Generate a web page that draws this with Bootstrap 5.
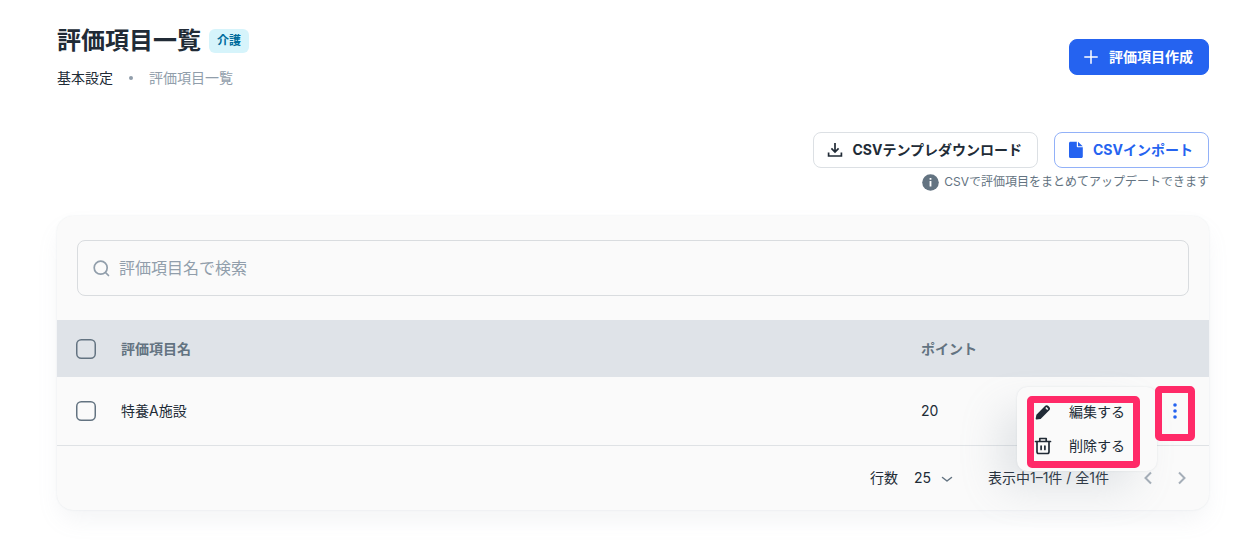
<!DOCTYPE html>
<html lang="ja">
<head>
<meta charset="utf-8">
<meta name="viewport" content="width=device-width, initial-scale=1">
<title>評価項目一覧</title>
<link href="https://cdn.jsdelivr.net/npm/bootstrap@5.3.0/dist/css/bootstrap.min.css" rel="stylesheet">
<style>
body{font-family:Inter,"Noto Sans CJK JP",sans-serif;font-size:14px;line-height:22px;color:#212b36;background:#fff}
.page{padding:23px 37px 32px 57px}
svg{display:block;flex:none}
.page-title{font-size:24px;line-height:36px;font-weight:700}
.tag{font-size:12px;line-height:24px;font-weight:700;padding:0 8px;border-radius:6px;background:#d6f4fb;color:#006c9c}
.crumbs a{color:#212b36;text-decoration:none}
.crumbs .crumb-dot{width:4px;height:4px;border-radius:50%;background:#919eab;margin:0 16px}
.crumbs .current{color:#919eab}
.btn{height:36px;font-size:14px;line-height:24px;font-weight:700;border-radius:8px;padding:0 15px;display:inline-flex;align-items:center}
.btn-create{background:#2563f0;color:#fff;border-color:#2563f0;padding-left:14px}
.btn-create svg{margin-right:11px}
.btn-template,.btn-import{padding:0 15px 0 11px;gap:7px}
.btn-template{border-color:#dce0e4;color:#212b36}
.btn-import{border-color:#92b1f8;color:#2563f0}
.csv-tools{margin-top:43px}
.hint{font-size:12px;line-height:20px;color:#637381;gap:5px}
.panel{background:#fafafa;border-radius:16px;box-shadow:0 0 2px rgba(145,158,171,.2),0 12px 24px -4px rgba(145,158,171,.12)}
.search{height:56px;border:1px solid #d9dcdf;border-radius:8px;padding:0 14px;gap:8px}
.search input{border:0;outline:0;background:transparent;font-size:16px;line-height:24px;padding:0;color:#212b36}
.search input::placeholder{color:#919eab;opacity:1}
.items{table-layout:fixed;width:100%;border-collapse:separate;border-spacing:0}
.items th{height:57px;background:#dfe3e8;color:#637381;font-weight:700;padding:0 16px}
.items td{height:69px;padding:0 16px;border-bottom:1px solid #dfe2e5}
.items .pick{width:48px;padding:0 0 0 17px}
.items .name-col{width:800px}
.items .act{width:68px;padding:0}
.form-check-input[type=checkbox]{display:block;width:24px;height:24px;margin:0;border:0;border-radius:6px;background:transparent url("data:image/svg+xml,%3Csvg xmlns='http://www.w3.org/2000/svg' viewBox='0 0 24 24'%3E%3Crect x='2.75' y='2.75' width='18.5' height='18.5' rx='4.5' fill='none' stroke='%23637381' stroke-width='1.5'/%3E%3C/svg%3E") center/24px no-repeat}
.form-check-input[type=checkbox]:checked{background-color:#2563f0}
.more{position:relative;width:40px;margin-left:14px}
.dots-btn,.pager-btn{border:0;background:none;padding:0;display:flex;align-items:center;justify-content:center}
.dots-btn{width:40px;height:55px}
.mark-dots{position:absolute;inset:2px 0 -2px;border:7px solid #ff2a68;border-radius:5px;pointer-events:none;z-index:3}
.row-menu{position:absolute;right:38px;top:3px;width:140px;height:84px;border-radius:10px;background:#fafafa;padding:8px;box-shadow:0 0 2px rgba(145,158,171,.24),-20px 20px 40px -4px rgba(145,158,171,.24);z-index:2}
.row-menu button{border:0;background:none;width:100%;height:34px;display:flex;align-items:center;padding:0 8px;gap:16px;color:#212b36}
.mark-menu{position:absolute;inset:9px 17px 3px 10px;border:7px solid #ff2a68;border-radius:5px;pointer-events:none}
.pager{height:64px;padding-right:10px}
.pager select{appearance:none;border:0;background:transparent;color:#212b36;width:40px;padding:0;line-height:22px}
.rows-select{position:relative;margin:0 34px 0 16px}
.rows-select svg{position:absolute;right:0;top:5px;pointer-events:none}
.range{margin-right:22px}
.pager-btn{width:34px;height:34px}
</style>
</head>
<body>
<main class="page">
  <header class="d-flex justify-content-between align-items-start">
    <div>
      <div class="d-flex align-items-center gap-2"><h1 class="page-title mb-0">評価項目一覧</h1><span class="tag">介護</span></div>
      <nav class="crumbs d-flex align-items-center mt-2" aria-label="パンくず"><a href="#">基本設定</a><span class="crumb-dot"></span><span class="current">評価項目一覧</span></nav>
    </div>
    <button type="button" class="btn btn-create mt-3"><svg width="14" height="14" viewBox="0 0 14 14" fill="none" stroke="#fff" stroke-width="1.5" stroke-linecap="round"><path d="M7 .8v12.4M.8 7h12.4"/></svg>評価項目作成</button>
  </header>

  <section class="csv-tools d-flex flex-column align-items-end mb-4">
    <div class="d-flex gap-3">
      <button type="button" class="btn btn-template"><svg width="20" height="20" viewBox="0 0 20 20" fill="none" stroke="#212b36" stroke-width="1.7"><path d="M10 3v8.500M6.400 8.400 10 12l3.600-3.600M3.600 12.500V16h12.800v-3.500"/></svg>CSVテンプレダウンロード</button>
      <button type="button" class="btn btn-import"><svg width="20" height="20" viewBox="0 0 20 20" fill="#2563f0"><path d="M4.500 1.700h6.300v4.800c0 .5.300.8.800.8h5.200v9.300c0 .9-.6 1.500-1.500 1.500H4.500c-.9 0-1.500-.6-1.500-1.500V3.200c0-.9.600-1.500 1.500-1.500Z"/><path d="M12 1.800 16.700 6.200H12Z"/></svg>CSVインポート</button>
    </div>
    <div class="hint d-flex align-items-center mt-1"><svg width="17" height="17" viewBox="0 0 17 17"><circle cx="8.500" cy="8.500" r="8.300" fill="#637381"/><path d="M7.600 4h1.800v1.800H7.600ZM7.600 7h1.800v5.500H7.600Z" fill="#fff"/></svg><span>CSVで評価項目をまとめてアップデートできます</span></div>
  </section>

  <section class="panel">
    <div class="px-3 py-4 mx-1">
      <label class="search d-flex align-items-center"><svg width="19" height="19" viewBox="0 0 19 19" fill="none" stroke="#919eab" stroke-width="1.7" stroke-linecap="round"><circle cx="8.700" cy="8.700" r="6.500"/><path d="m13.500 13.500 3 3"/></svg><input class="flex-grow-1" type="text" placeholder="評価項目名で検索" aria-label="評価項目名で検索"></label>
    </div>
    <table class="items">
      <thead><tr>
        <th class="pick"><input class="form-check-input" type="checkbox" aria-label="すべて選択"></th>
        <th class="name-col">評価項目名</th><th>ポイント</th><th class="act"></th>
      </tr></thead>
      <tbody><tr>
        <td class="pick"><input class="form-check-input" type="checkbox" aria-label="特養A施設を選択"></td>
        <td>特養A施設</td><td>20</td>
        <td class="act"><div class="more">
          <button type="button" class="dots-btn" aria-label="メニュー"><svg width="20" height="20" viewBox="0 0 20 20" fill="#2563f0"><circle cx="10" cy="4" r="1.800"/><circle cx="10" cy="10" r="1.800"/><circle cx="10" cy="16" r="1.800"/></svg></button>
          <span class="mark-dots"></span>
          <div class="row-menu">
            <button type="button"><svg width="20" height="20" viewBox="0 0 20 20" fill="#212b36"><path fill-rule="evenodd" d="M3.400 12.700 12 4c1-1 2.400-1 3.400 0l.9.900c1 1 1 2.400 0 3.400L7.600 16.900l-4 .6c-.6.1-1-.3-.9-.9ZM12.300 6.100l1.900 1.900 1.100-1.100-1.900-1.900Z"/></svg>編集する</button>
            <button type="button"><svg width="20" height="20" viewBox="0 0 20 20" fill="none" stroke="#212b36" stroke-width="1.700" stroke-linecap="round" stroke-linejoin="round"><path d="M2.500 5.500h15M6.800 5.300V2.500h6.400v2.800M4 5.800v10c0 1.100.6 1.700 1.700 1.700h8.600c1.100 0 1.700-.6 1.700-1.700v-10M8.100 10v3.500M11.900 10v3.500"/></svg>削除する</button>
            <span class="mark-menu"></span>
          </div>
        </div></td>
      </tr></tbody>
    </table>
    <div class="pager d-flex align-items-center justify-content-end">
      <label for="rows">行数</label>
      <div class="rows-select"><select id="rows"><option>25</option><option>50</option></select><svg width="14" height="14" viewBox="0 0 14 14" fill="none" stroke="#637381" stroke-width="1.500" stroke-linecap="round" stroke-linejoin="round"><path d="m2.500 5.500 4.500 3.500 4.500-3.500"/></svg></div>
      <span class="range">表示中1–1件 / 全1件</span>
      <button type="button" class="pager-btn" aria-label="前へ"><svg width="20" height="20" viewBox="0 0 20 20" fill="none" stroke="#a5aeb8" stroke-width="2"><path d="m13 4.500-5.500 5.500 5.500 5.500"/></svg></button>
      <button type="button" class="pager-btn" aria-label="次へ"><svg width="20" height="20" viewBox="0 0 20 20" fill="none" stroke="#a5aeb8" stroke-width="2"><path d="m7 4.500 5.500 5.500-5.500 5.500"/></svg></button>
    </div>
  </section>
</main>
<script src="https://cdn.jsdelivr.net/npm/bootstrap@5.3.0/dist/js/bootstrap.bundle.min.js"></script>
</body>
</html>
